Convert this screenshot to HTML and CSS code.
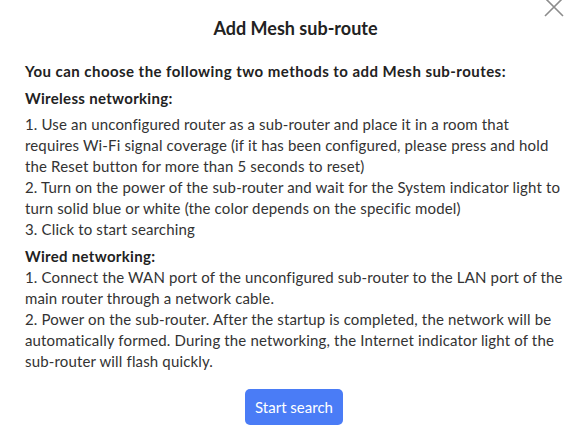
FILE: index.html
```html
<!DOCTYPE html>
<html lang="en">
<head>
    <meta charset="UTF-8">
    <title>Add Mesh sub-route</title>
    <link rel="stylesheet" href="styles.css">
</head>
<body>

    <div class="dialog">
        <button class="close-button" aria-label="Close">
            <svg width="22" height="22" viewBox="0 0 22 22">
                <path d="M2 2 L20 20 M20 2 L2 20" stroke="#8c8c8c" stroke-width="1.6" fill="none"/>
            </svg>
        </button>

        <h2 class="title">Add Mesh sub-route</h2>

        <div class="content">
            <p class="lead">You can choose the following two methods to add Mesh sub-routes:</p>

            <p class="section-title">Wireless networking:</p>
            <p class="steps">
                1. Use an unconfigured router as a sub-router and place it in a room that requires Wi-Fi signal coverage (if it has been configured, please press and hold the Reset button for more than 5 seconds to reset)<br>
                2. Turn on the power of the sub-router and wait for the System indicator light to turn solid blue or white (the color depends on the specific model)<br>
                3. Click to start searching
            </p>

            <p class="section-title wired">Wired networking:</p>
            <p class="steps">
                1. Connect the WAN port of the unconfigured sub-router to the LAN port of the main router through a network cable.<br>
                2. Power on the sub-router. After the startup is completed, the network will be automatically formed. During the networking, the Internet indicator light of the sub-router will flash quickly.
            </p>
        </div>

        <div class="actions">
            <button class="search-button">Start search</button>
        </div>
    </div>

</body>
</html>
```

FILE: styles.css
```css
body {
    margin: 0;
    background-color: #fff;
    font-family: Lato, "Open Sans", sans-serif;
    color: #333;
}

.dialog {
    position: relative;
    width: 588px;
    height: 439px;
    box-sizing: border-box;
    padding: 16px 22px 0 25px;
    overflow: hidden;
}

.close-button {
    position: absolute;
    top: -4px;
    right: 23px;
    padding: 0;
    border: none;
    background: none;
    cursor: pointer;
}

.close-button svg {
    display: block;
}

.title {
    margin: 0 0 21px;
    font-size: 18px;
    line-height: 24px;
    text-align: center;
    color: #222;
}

.content {
    width: 541px;
    font-size: 15px;
    line-height: 21px;
    letter-spacing: 0.15px;
}

.content p {
    margin: 0;
}

.lead {
    font-weight: bold;
    letter-spacing: 0.45px;
    margin-bottom: 6px !important;
    color: #222;
}

.section-title {
    font-weight: bold;
    letter-spacing: 0.3px;
    margin-bottom: 5px !important;
    color: #222;
}

.section-title.wired {
    margin-bottom: 0 !important;
}

.steps {
    margin-bottom: 6px !important;
}

.actions {
    display: flex;
    justify-content: center;
    margin-top: 17px;
    padding-right: 3px;
}

.search-button {
    width: 98px;
    height: 36px;
    border: none;
    border-radius: 5px;
    background-color: #4a7cf6;
    color: #fff;
    font-family: Lato, "Open Sans", sans-serif;
    font-size: 15px;
    cursor: pointer;
}
```
